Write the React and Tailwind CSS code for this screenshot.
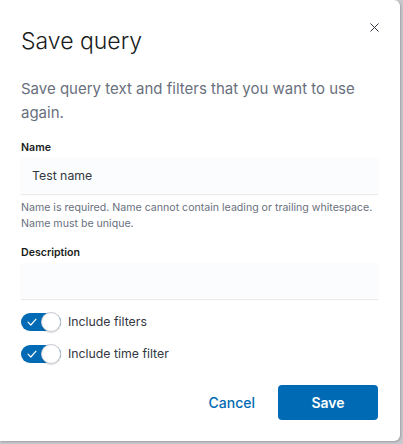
import React from "react";

function Switch({ label }) {
  return (
    <div className="flex items-center h-[20px]">
      <div className="relative w-[40px] h-[20px] flex items-center">
        <div className="w-[40px] h-[18px] rounded-full bg-[#006bb4] flex items-center pl-[6px]">
          <svg width="10" height="8" viewBox="0 0 10 8" fill="none">
            <path d="M1 4.2 L3.8 7 L9 1.2" stroke="white" strokeWidth="1.2" strokeLinecap="round" strokeLinejoin="round" />
          </svg>
        </div>
        <div className="absolute right-0 top-0 w-[20px] h-[20px] rounded-full bg-white border border-[#c9ccd2] shadow-[0_1px_2px_rgba(0,0,0,0.15)]" />
      </div>
      <span className="ml-[7px] text-[12.3px] text-[#343741]">{label}</span>
    </div>
  );
}

export default function App() {
  return (
    <div className="w-[403px] h-[444px] bg-[#c6c8cd] overflow-hidden" style={{ fontFamily: "Inter, 'Noto Sans', sans-serif" }}>
      <div className="relative w-[400px] h-[441px] bg-white rounded-br-[6px] rounded-tr-[6px] shadow-[1px_1px_2px_rgba(0,0,0,0.2)] flex flex-col">
        <button className="absolute right-[21px] top-[23px] w-[9px] h-[9px] flex items-center justify-center">
          <svg width="9" height="9" viewBox="0 0 9 9">
            <path d="M0.5 0.5 L8.5 8.5 M8.5 0.5 L0.5 8.5" stroke="#343741" strokeWidth="1" />
          </svg>
        </button>
        <div className="px-[21px] pt-[25px]">
          <h1 className="text-[23px] leading-[32px] font-light text-[#1a1c21]">Save query</h1>
        </div>
        <div className="px-[21px] pt-[20px] flex flex-col">
          <p className="text-[15px] leading-[24px] text-[#69707d]">
            Save query text and filters that you want to use again.
          </p>
          <div className="mt-[15px] text-[10.6px] leading-[16px] font-semibold text-[#1a1c21]">Name</div>
          <div className="mt-[2px] h-[36px] w-[357px] bg-[#fbfcfd] shadow-[0_1px_1px_rgba(0,0,0,0.08)] flex items-center px-[11px] text-[12.3px] text-[#343741]">
            Test name
          </div>
          <div className="mt-[6px] text-[10.6px] leading-[16px] text-[#69707d]">
            Name is required. Name cannot contain leading or trailing whitespace. Name must be unique.
          </div>
          <div className="mt-[13px] text-[10.6px] leading-[16px] font-semibold text-[#1a1c21]">Description</div>
          <div className="mt-[2px] h-[36px] w-[357px] bg-[#fbfcfd] shadow-[0_1px_1px_rgba(0,0,0,0.08)]" />
          <div className="mt-[13px] flex flex-col gap-[12px]">
            <Switch label="Include filters" />
            <Switch label="Include time filter" />
          </div>
          <div className="mt-[21px] flex items-center justify-end pr-[1px]">
            <button className="text-[14px] font-medium text-[#006bb4] mr-[23px]">Cancel</button>
            <button className="w-[100px] h-[35px] rounded-[4px] bg-[#006bb4] text-white text-[14px] font-semibold">Save</button>
          </div>
        </div>
      </div>
    </div>
  );
}
